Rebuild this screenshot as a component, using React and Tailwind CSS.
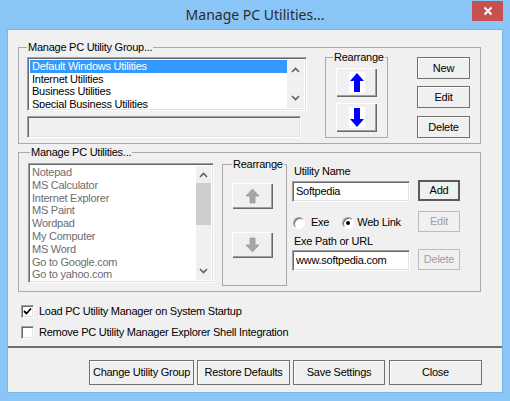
import React from 'react'

const font = { fontFamily: '"Liberation Sans", Arial, sans-serif' }

const sunken =
  'border border-t-[#a0a0a0] border-l-[#a0a0a0] border-r-white border-b-white shadow-[inset_1px_1px_0_#696969,inset_-1px_-1px_0_#e3e3e3]'

const raised =
  'bg-[#f0f0f0] shadow-[inset_1px_1px_0_#ffffff,inset_-1px_-1px_0_#696969,inset_-2px_-2px_0_#a0a0a0]'

const BlueArrow = ({ down }) => (
  <svg width="16" height="21" viewBox="0 0 16 21" className={down ? 'rotate-180' : ''}>
    <rect x="0" y="0" width="16" height="21" fill="#ffffff" />
    <polygon points="8,1 15,9 11,9 11,20 5,20 5,9 1,9" fill="#0000ff" />
  </svg>
)

const GrayArrow = ({ down }) => (
  <svg width="15" height="16" viewBox="0 0 15 16" className={down ? 'rotate-180' : ''}>
    <polygon points="7.5,1 14,8 10,8 10,15 5,15 5,8 1,8" fill="#a7a7a7" stroke="#939393" strokeWidth="0.7" />
  </svg>
)

const Chevron = ({ down }) => (
  <svg width="9" height="6" viewBox="0 0 9 6" className={down ? 'rotate-180' : ''}>
    <path d="M1 5 L4.5 1.5 L8 5" fill="none" stroke="#606060" strokeWidth="1.6" />
  </svg>
)

const Btn = ({ children, className = '', disabled, isDefault }) => (
  <div
    className={`flex items-center justify-center bg-[#f0f0f0] ${
      isDefault
        ? 'border-2 border-[#5a5a5a]'
        : disabled
        ? 'border border-[#bcbcbc] text-[#a0a0a0]'
        : 'border border-[#707070] shadow-[inset_1px_1px_0_#ffffff]'
    } ${className}`}
  >
    {children}
  </div>
)

const Legend = ({ children, className = '' }) => (
  <span className={`absolute -top-[7px] bg-[#f0f0f0] px-[1px] leading-[13px] ${className}`}>{children}</span>
)

const Radio = ({ checked }) => (
  <span className="flex h-[12px] w-[12px] items-center justify-center rounded-full border border-t-[#a0a0a0] border-l-[#a0a0a0] border-r-white border-b-white bg-white shadow-[inset_1px_1px_0_#696969]">
    {checked && <span className="h-[4px] w-[4px] rounded-full bg-black" />}
  </span>
)

const Check = ({ checked }) => (
  <span className={`flex h-[13px] w-[13px] items-center justify-center bg-white ${sunken}`}>
    {checked && (
      <svg width="9" height="9" viewBox="0 0 9 9">
        <path d="M1 4 L3.5 6.5 L8 1.5" fill="none" stroke="#000" strokeWidth="1.8" />
      </svg>
    )}
  </span>
)

const groups = ['Default Windows Utilities', 'Internet Utilities', 'Business Utilities', 'Special Business Utilities']
const utils = [
  'Notepad',
  'MS Calculator',
  'Internet Explorer',
  'MS Paint',
  'Wordpad',
  'My Computer',
  'MS Word',
  'Go to Google.com',
  'Go to yahoo.com',
]

export default function App() {
  return (
    <div
      className="flex h-[401px] w-[510px] flex-col bg-[#8ac5f7] text-[11px] tracking-[-0.25px] text-black"
      style={font}
    >
      {/* Title bar */}
      <div className="relative flex h-[29px] shrink-0 items-center justify-center">
        <span
          className="text-[14px] tracking-normal text-[#2b2b2b]"
          style={{ fontFamily: '"Noto Sans", "Open Sans", sans-serif' }}
        >
          Manage PC Utilities...
        </span>
        <div className="absolute right-[7px] top-[1px] flex h-[20px] w-[31px] items-center justify-center bg-[#c75050]">
          <svg width="10" height="10" viewBox="0 0 10 10">
            <path d="M1.5 1.5 L8.5 8.5 M8.5 1.5 L1.5 8.5" stroke="#fff" strokeWidth="2" />
          </svg>
        </div>
      </div>

      {/* Client area */}
      <div className="ml-[7px] mr-[7px] h-[364px] border border-[#7cb4e6] bg-[#f0f0f0]">
        <div className="px-[10px] pt-[17px]">
          {/* Group 1 */}
          <div className="relative flex h-[97px] w-[463px] border border-[#a9a9a9] pl-[8px] pt-[9px]">
            <Legend className="left-[8px]">Manage PC Utility Group...</Legend>
            <div className="flex w-[280px] flex-col">
              <div className={`flex h-[54px] w-[280px] bg-white p-[2px] ${sunken}`}>
                <div className="flex-1 overflow-hidden">
                  {groups.map((g, i) => (
                    <div
                      key={g}
                      className={`h-[12.5px] pl-[2px] leading-[12px] ${i === 0 ? 'bg-[#3399ff] text-white' : ''}`}
                    >
                      {g}
                    </div>
                  ))}
                </div>
                <div className="flex w-[17px] flex-col items-center justify-between bg-[#f0f0f0] py-[7px]">
                  <Chevron />
                  <Chevron down />
                </div>
              </div>
              <div className={`mt-[5px] h-[22px] w-[274px] bg-[#f0f0f0] ${sunken}`} />
            </div>

            <div className="relative ml-[18px] flex h-[81px] w-[63px] flex-col border border-[#a9a9a9] pl-[10px] pt-[10px]">
              <Legend className="left-[7px]">Rearrange</Legend>
              <div className={`flex h-[29px] w-[41px] items-center justify-center ${raised}`}>
                <BlueArrow />
              </div>
              <div className={`mt-[6px] flex h-[29px] w-[41px] items-center justify-center ${raised}`}>
                <BlueArrow down />
              </div>
            </div>

            <div className="ml-[29px] flex w-[53px] flex-col">
              <Btn className="h-[22px]">New</Btn>
              <Btn className="mt-[7px] h-[22px]">Edit</Btn>
              <Btn className="mt-[8px] h-[22px]">Delete</Btn>
            </div>
          </div>

          {/* Group 2 */}
          <div className="relative mt-[8px] flex h-[140px] w-[463px] border border-[#a9a9a9] pl-[9px] pt-[10px]">
            <Legend className="left-[11px]">Manage PC Utilities...</Legend>
            <div className={`flex h-[120px] w-[186px] bg-white p-[2px] ${sunken}`}>
              <div className="flex-1 overflow-hidden text-[#6d6d6d]">
                {utils.map((u) => (
                  <div key={u} className="h-[12.8px] pl-[1px] leading-[12px]">
                    {u}
                  </div>
                ))}
              </div>
              <div className="flex w-[15px] flex-col items-center bg-[#f0f0f0]">
                <div className="flex h-[17px] items-center">
                  <Chevron />
                </div>
                <div className="h-[42px] w-full bg-[#cdcdcd]" />
                <div className="flex flex-1 items-end pb-[6px]">
                  <Chevron down />
                </div>
              </div>
            </div>

            <div className="relative ml-[8px] mt-[1px] flex h-[122px] w-[65px] flex-col border border-[#a9a9a9] pl-[9px] pt-[18px]">
              <Legend className="left-[9px]">Rearrange</Legend>
              <div className={`flex h-[26px] w-[41px] items-center justify-center ${raised}`}>
                <GrayArrow />
              </div>
              <div className={`mt-[23px] flex h-[26px] w-[41px] items-center justify-center ${raised}`}>
                <GrayArrow down />
              </div>
            </div>

            <div className="ml-[5px] flex">
              <div className="flex w-[118px] flex-col pt-[2px]">
                <div className="h-[13px] pl-[2px] leading-[13px]">Utility Name</div>
                <div className={`mt-[3px] flex h-[21px] items-center bg-white pl-[3px] ${sunken}`}>Softpedia</div>
                <div className="mt-[10px] flex h-[21px] items-center">
                  <span className="ml-[1px]">
                    <Radio />
                  </span>
                  <span className="ml-[6px]">Exe</span>
                  <span className="ml-[13px]">
                    <Radio checked />
                  </span>
                  <span className="ml-[3px]">Web Link</span>
                </div>
                <div className="mt-[2px] h-[13px] pl-[2px] leading-[13px]">Exe Path or URL</div>
                <div className={`mt-[2px] flex h-[21px] items-center bg-white pl-[3px] ${sunken}`}>
                  www.softpedia.com
                </div>
              </div>
              <div className="ml-[8px] flex w-[42px] flex-col">
                <Btn isDefault className="mt-[17px] h-[21px]">
                  Add
                </Btn>
                <Btn disabled className="mt-[10px] h-[21px]">
                  Edit
                </Btn>
                <Btn disabled className="mt-[17px] h-[21px]">
                  Delete
                </Btn>
              </div>
            </div>
          </div>

          {/* Checkboxes */}
          <div className="mt-[13px] flex h-[13px] items-center pl-[3px]">
            <Check checked />
            <span className="ml-[5px]">Load PC Utility Manager on System Startup</span>
          </div>
          <div className="mt-[8px] flex h-[13px] items-center pl-[3px]">
            <Check />
            <span className="ml-[5px]">Remove PC Utility Manager Explorer Shell Integration</span>
          </div>
        </div>

        <div className="mt-[7px] h-[2px] bg-[#6e6e6e]" />

        <div className="mt-[12px] flex justify-end gap-[3px] pr-[20px]">
          <Btn className="h-[25px] w-[105px]">Change Utility Group</Btn>
          <Btn className="h-[25px] w-[93px]">Restore Defaults</Btn>
          <Btn className="h-[25px] w-[92px]">Save Settings</Btn>
          <Btn className="ml-[1px] h-[25px] w-[93px]">Close</Btn>
        </div>
      </div>
    </div>
  )
}
